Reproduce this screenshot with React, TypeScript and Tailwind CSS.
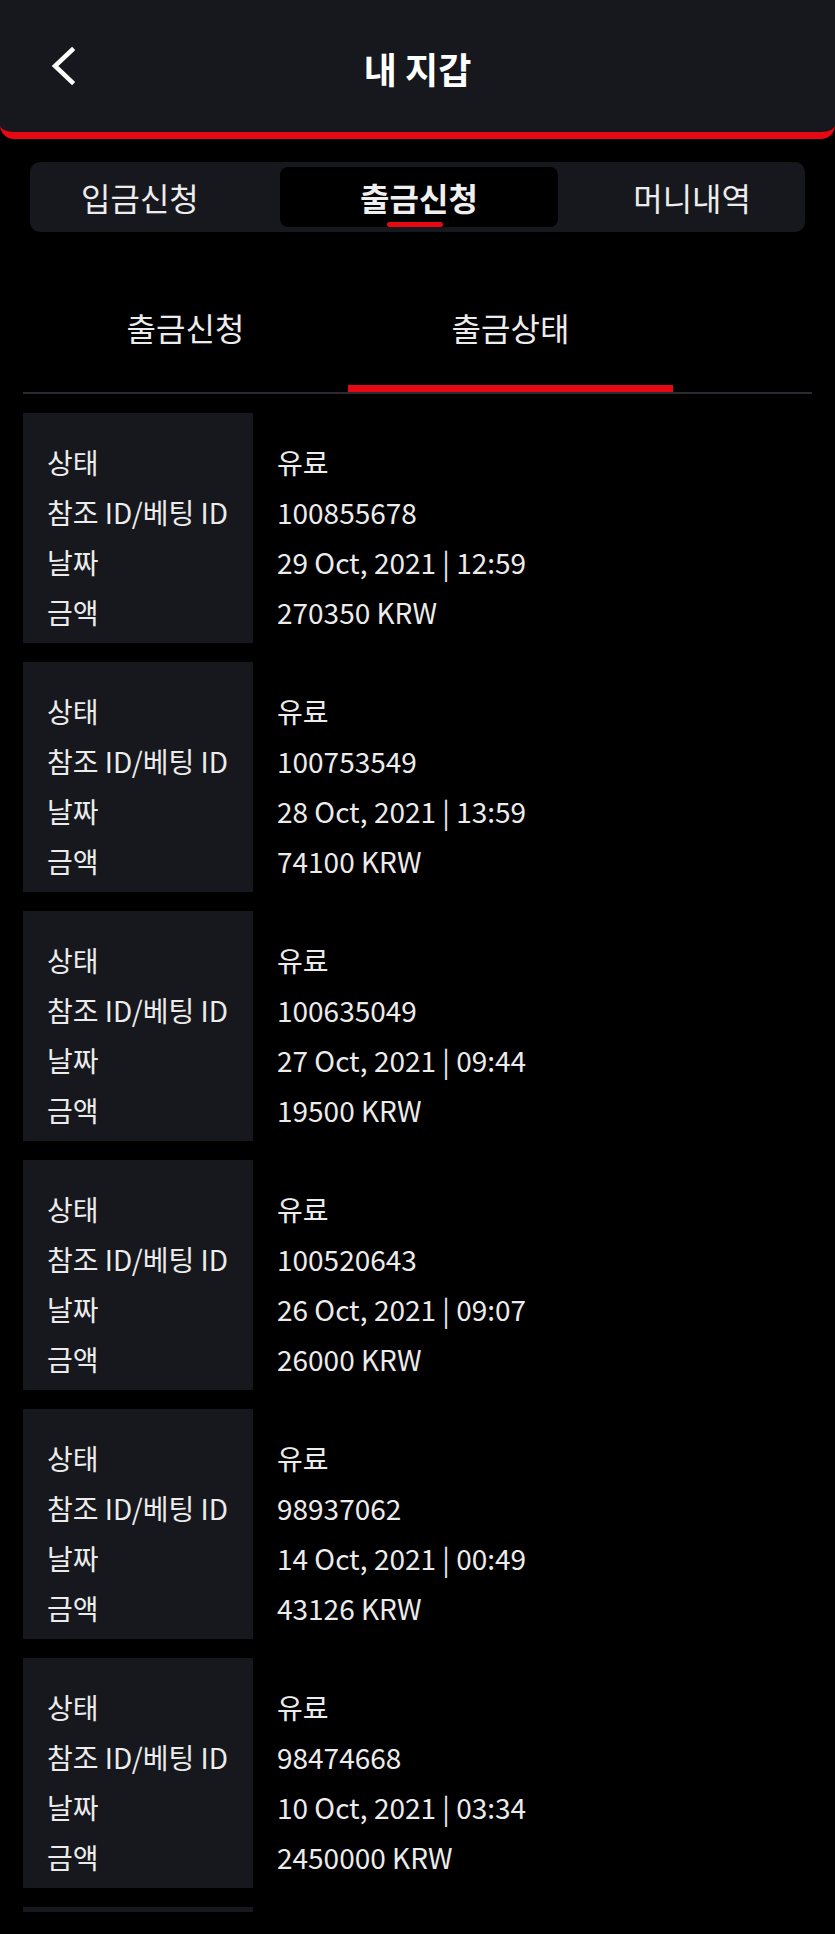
import React from "react";

const rows = [
  { id: "100855678", date: "29 Oct, 2021 | 12:59", amount: "270350 KRW" },
  { id: "100753549", date: "28 Oct, 2021 | 13:59", amount: "74100 KRW" },
  { id: "100635049", date: "27 Oct, 2021 | 09:44", amount: "19500 KRW" },
  { id: "100520643", date: "26 Oct, 2021 | 09:07", amount: "26000 KRW" },
  { id: "98937062", date: "14 Oct, 2021 | 00:49", amount: "43126 KRW" },
  { id: "98474668", date: "10 Oct, 2021 | 03:34", amount: "2450000 KRW" },
];

const labels = ["상태", "참조 ID/베팅 ID", "날짜", "금액"];

export default function App() {
  return (
    <div
      className="min-h-[1934px] w-[835px] bg-black text-[#ececec]"
      style={{ fontFamily: '"Noto Sans CJK KR", "Noto Sans", sans-serif' }}
    >
      <header className="relative flex h-[139px] items-center rounded-b-[14px] border-b-[7px] border-[#e50914] bg-[#17181d]">
        <div className="pl-[50px]">
          <svg width="28" height="40" viewBox="0 0 28 40" fill="none">
            <polyline
              points="22,4 5,20 22,36"
              stroke="#ffffff"
              strokeWidth="4.5"
              strokeLinecap="square"
              strokeLinejoin="miter"
            />
          </svg>
        </div>
        <h1 className="absolute left-0 right-0 top-[43px] text-center text-[36px] font-bold leading-[50px] text-white">
          내 지갑
        </h1>
      </header>

      <div className="mx-[30px] mt-[23px] flex h-[70px] items-center justify-between rounded-[10px] bg-[#17181d] pl-[51px] pr-[54px] text-[32px] leading-[40px]">
        <span>입금신청</span>
        <div className="relative ml-[6px] flex h-[60px] w-[278px] items-center justify-center rounded-[8px] bg-black">
          <span className="font-bold text-[#efefef]">출금신청</span>
          <span className="absolute bottom-0 left-[107px] h-[5px] w-[56px] rounded-full bg-[#e50914]" />
        </div>
        <span>머니내역</span>
      </div>

      <div className="mx-[23px] mt-[30px] flex border-b-2 border-[#2a2c33] text-[32px] leading-[40px]">
        <div className="flex h-[130px] w-[325px] items-center justify-center border-b-[7px] border-transparent pt-[7px]">
          출금신청
        </div>
        <div className="flex h-[130px] w-[325px] items-center justify-center border-b-[7px] border-[#e50914] pt-[7px]">
          출금상태
        </div>
      </div>

      <div className="mx-[23px] mt-[19px] flex flex-col gap-[19px] text-[28px]">
        {rows.map((r) => (
          <div key={r.id} className="flex h-[230px]">
            <div className="w-[230px] bg-[#17181d] pl-[24px] pt-[24px]">
              {labels.map((l) => (
                <div key={l} className="h-[50px] whitespace-nowrap leading-[50px]">
                  {l}
                </div>
              ))}
            </div>
            <div className="pl-[24px] pt-[24px]">
              {["유료", r.id, r.date, r.amount].map((v, i) => (
                <div key={i} className="h-[50px] whitespace-nowrap leading-[50px]">
                  {v}
                </div>
              ))}
            </div>
          </div>
        ))}
        <div className="h-[5px] w-[230px] bg-[#17181d]" />
      </div>
    </div>
  );
}
